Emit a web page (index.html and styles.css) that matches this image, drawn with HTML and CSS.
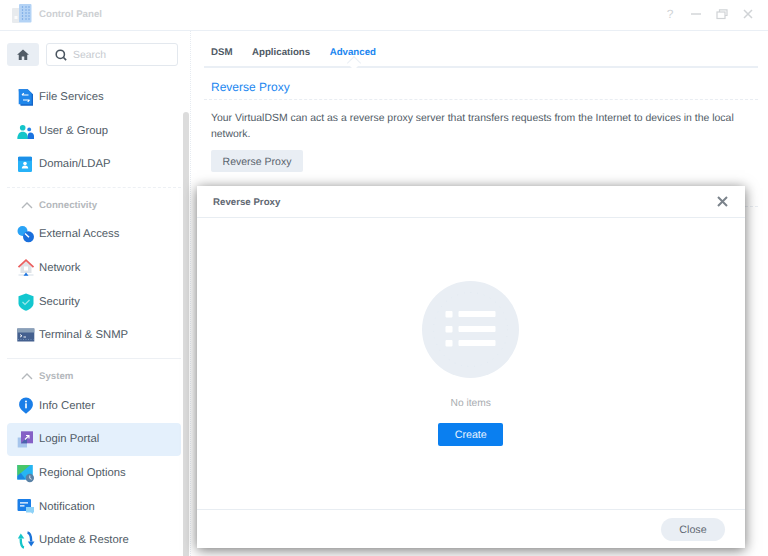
FILE: index.html
```html
<!DOCTYPE html>
<html lang="en">
<head>
<meta charset="utf-8">
<title>Control Panel</title>
<link rel="stylesheet" href="styles.css">
</head>
<body>
<div class="window">
  <header class="titlebar">
    <div class="title-left">
      <svg class="app-icon" width="20" height="20" viewBox="0 0 20 20">
        <rect x="0" y="4" width="8" height="15" rx="1" fill="#e8ebee"/>
        <rect x="2.500" y="12" width="3" height="3" fill="#fbfcfc"/>
        <rect x="7" y="0" width="12.500" height="18.500" rx="1" fill="#b4d3f5"/>
        <path d="M10.500 2v14M14 2v14M17 2v14" stroke="#86b2e8" stroke-width="1.200" stroke-dasharray="2 1"/>
      </svg>
      <span class="title-text">Control Panel</span>
    </div>
    <div class="title-actions">
      <span class="help">?</span>
      <svg width="12" height="12" viewBox="0 0 12 12"><path d="M1 6h10" stroke="#d0d3d6" stroke-width="1.400"/></svg>
      <svg width="12" height="12" viewBox="0 0 12 12" fill="none" stroke="#d0d3d6" stroke-width="1.200"><rect x="1" y="4" width="8" height="6.500"/><path d="M3.500 4V1.800h7.500v5.700H9"/></svg>
      <svg width="12" height="12" viewBox="0 0 12 12"><path d="M2 2l8 8M10 2l-8 8" stroke="#d0d3d6" stroke-width="1.500"/></svg>
    </div>
  </header>
  <div class="body">
    <aside class="sidebar">
      <div class="tools">
        <button class="home"><svg width="12" height="11" viewBox="0 0 14 13"><path d="M7 .5L0 6.800h2V13h3.500V9h3v4H12V6.800h2z" fill="#525c66"/></svg></button>
        <div class="search">
          <svg width="12" height="12" viewBox="0 0 14 14" fill="none" stroke="#4a5560" stroke-width="1.800"><circle cx="6.200" cy="6.200" r="4.800"/><path d="M9.800 9.800L13 13"/></svg>
          <span>Search</span>
        </div>
      </div>
      <nav class="nav">
        <div class="group">
          <a class="item"><svg class="ico" viewBox="0 0 18 18"><path d="M1.700 1.300h9l5.300 5v11.400H3.500z" fill="#1565c8"/><path d="M1.700 1.300h9l4 4v11H1.700z" fill="#1f86ea"/><path d="M5 7h6.500M5 7l1.800-1.800M12.500 12H6M12.500 12l-1.800 1.800" stroke="#fff" stroke-width="1.200" fill="none"/></svg><span>File Services</span></a>
          <a class="item"><svg class="ico" viewBox="0 0 18 18"><circle cx="5.700" cy="5.700" r="2.800" fill="#15c5c9"/><path d="M.3 17c0-4.800 2.200-7.300 5.400-7.300S11 12.200 11 17z" fill="#15c5c9"/><circle cx="12.200" cy="7.400" r="1.900" fill="#2483e8"/><path d="M10.700 17v-3c0-2 .8-3.600 2.800-3.600s3.500 1.600 3.500 3.600v3z" fill="#1a73e0"/></svg><span>User &amp; Group</span></a>
          <a class="item"><svg class="ico" viewBox="0 0 18 18"><rect x="1" y="1.700" width="14" height="15.300" rx="1.200" fill="#27b2f8"/><rect x="1" y="1.700" width="14" height="4" rx="1" fill="#1c8fe8"/><circle cx="8" cy="8.500" r="1.800" fill="#fff"/><path d="M4.800 13.500c0-2 1.300-3 3.200-3s3.200 1 3.200 3z" fill="#fff"/></svg><span>Domain/LDAP</span></a>
        </div>
        <div class="group">
          <div class="group-head"><svg width="12" height="7" viewBox="0 0 12 7" fill="none" stroke="#b4b8bc" stroke-width="1.400"><path d="M1 6l5-5 5 5"/></svg><span>Connectivity</span></div>
          <a class="item"><svg class="ico" viewBox="0 0 18 18"><path d="M4.500 1.500l8 8-3 3.500-8-7.500z" fill="#2aa3f6"/><circle cx="5.500" cy="6" r="5" fill="#2aa3f6"/><circle cx="11.500" cy="11.800" r="5.500" fill="#1a6fdc"/><path d="M8 8.500l4 3.800" stroke="#fff" stroke-width="1.400"/></svg><span>External Access</span></a>
          <a class="item"><svg class="ico" viewBox="0 0 18 18"><path d="M3.500 7.500L9 2.500l5.500 5v6.500h-11z" fill="#dfe3e7"/><path d="M1.500 8.200L9 1.200l7.500 7" stroke="#ea5f5f" stroke-width="1.800" fill="none"/><rect x="7" y="7.500" width="4" height="4" fill="#fff"/><path d="M1.500 16h15" stroke="#c8d4df" stroke-width=".8"/><path d="M9 13.500L6.500 16.800h5z" fill="#1a73e0"/></svg><span>Network</span></a>
          <a class="item"><svg class="ico" viewBox="0 0 18 18"><path d="M9 .500l7.500 2.700v7c0 3.500-3.500 6-7.500 7.500-4-1.500-7.500-4-7.500-7.500v-7z" fill="#13c7cf"/><path d="M5.500 9l2.500 2.500 4.500-4.500" stroke="#9ae8ea" stroke-width="1.200" fill="none"/></svg><span>Security</span></a>
          <a class="item"><svg class="ico" viewBox="0 0 18 18"><rect x=".3" y="2.500" width="17" height="13" fill="#44608f"/><rect x=".3" y="2.500" width="17" height="4" fill="#8aa0b8"/><path d="M3 8.500l2 1.300-2 1.300M6.500 11H9" stroke="#fff" stroke-width=".9" fill="none"/><path d="M1 13.500h15.500" stroke="#6f8fb8" stroke-width="1" stroke-dasharray="1 1.500"/></svg><span>Terminal &amp; SNMP</span></a>
        </div>
        <div class="group">
          <div class="group-head"><svg width="12" height="7" viewBox="0 0 12 7" fill="none" stroke="#b4b8bc" stroke-width="1.400"><path d="M1 6l5-5 5 5"/></svg><span>System</span></div>
          <a class="item"><svg class="ico" viewBox="0 0 18 18"><path d="M9 .500a6.900 6.900 0 0 1 6.900 6.900c0 4.300-3.900 6.500-6.900 9.300-3-2.800-6.900-5-6.900-9.300A6.900 6.900 0 0 1 9 .500z" fill="#1a7ee8"/><rect x="8.200" y="6.300" width="1.600" height="5" fill="#fff"/><circle cx="9" cy="4.400" r="1" fill="#fff"/></svg><span>Info Center</span></a>
          <a class="item active"><svg class="ico" viewBox="0 0 18 18"><rect x=".7" y="7.500" width="9.300" height="10" fill="#a6c5ec"/><rect x="4" y="1.300" width="12" height="12" fill="#8560c6"/><path d="M4 13.300l6-6v6z" fill="#4a64ad"/><path d="M8 9.500l4-4M9 5.500h3v3" stroke="#fff" stroke-width="1.100" fill="none"/></svg><span>Login Portal</span></a>
          <a class="item"><svg class="ico" viewBox="0 0 18 18"><rect x=".3" y="1" width="15.500" height="14.500" fill="#26b5f2"/><path d="M.3 1h13L.3 12z" fill="#48c66a"/><path d="M.3 12l3.500-3 5 6.500H.3z" fill="#1a86e0"/><circle cx="12.800" cy="14" r="4.200" fill="#5a82a6"/><path d="M12.800 11.500V14.300l1.800 1" stroke="#fff" stroke-width=".8" fill="none"/></svg><span>Regional Options</span></a>
          <a class="item"><svg class="ico" viewBox="0 0 18 18"><rect x=".5" y="1" width="13.500" height="12" rx="1" fill="#1a7ee8"/><path d="M3 4.800h8M3 7.800h4.500" stroke="#fff" stroke-width="1.200"/><path d="M9 9h8v5.500h-1v1.500l-2-1.500H9z" fill="#8ed2f7"/></svg><span>Notification</span></a>
          <a class="item"><svg class="ico" viewBox="0 0 18 18"><path d="M7 16.500C4.300 16 3.700 12 3.700 7.500" fill="none" stroke="#16c5ca" stroke-width="2.400"/><path d="M3.800 2.500L.8 7.500h6.500z" fill="#16c5ca"/><path d="M10.500 1.500c2.800.5 3.700 4.500 3.700 9" fill="none" stroke="#1a73d9" stroke-width="2.400"/><path d="M14.200 15.500l-3.300-5h6.600z" fill="#1a73d9"/></svg><span>Update &amp; Restore</span></a>
        </div>
      </nav>
      <div class="scrollbar"></div>
    </aside>
    <main class="main">
      <div class="tabs">
        <span class="tab">DSM</span>
        <span class="tab">Applications</span>
        <span class="tab current">Advanced</span>
      </div>
      <section class="section">
        <h2 class="section-title">Reverse Proxy</h2>
        <p class="section-text">Your VirtualDSM can act as a reverse proxy server that transfers requests from the Internet to devices in the local network.</p>
        <button class="btn-grey">Reverse Proxy</button>
        <div class="section-rule"></div>
      </section>
    </main>
  </div>
  <div class="dialog">
    <div class="dialog-head">
      <span class="dialog-title">Reverse Proxy</span>
      <svg width="11" height="11" viewBox="0 0 11 11"><path d="M1 1l9 9M10 1l-9 9" stroke="#7b838b" stroke-width="2"/></svg>
    </div>
    <div class="dialog-body">
      <svg class="empty-art" width="97" height="97" viewBox="0 0 97 97">
        <circle cx="48.500" cy="48.500" r="48.500" fill="#e9eef4"/>
        <circle cx="48.500" cy="48.500" r="37" fill="none" stroke="#dbe5ef" stroke-width=".7" stroke-dasharray=".7 6"/>
        <g fill="#fff">
          <rect x="23.500" y="30" width="7" height="6.500" rx="1"/><rect x="36.500" y="30" width="37" height="6" rx="1"/>
          <rect x="23.500" y="45" width="7" height="6.500" rx="1"/><rect x="36.500" y="45" width="37" height="6" rx="1"/>
          <rect x="23.500" y="59" width="7" height="6.500" rx="1"/><rect x="36.500" y="59" width="37" height="6" rx="1"/>
        </g>
      </svg>
      <p class="empty-text">No items</p>
      <button class="btn-blue">Create</button>
    </div>
    <div class="dialog-foot"><button class="btn-close">Close</button></div>
  </div>
</div>
</body>
</html>
```
FILE: styles.css
```css
* { box-sizing: border-box; }
html, body { margin: 0; padding: 0; height: 100%; overflow: hidden; }
body { font-family: "Liberation Sans", Arial, sans-serif; color: #4f5a65; background: #fff; text-rendering: geometricPrecision; }
button { text-rendering: geometricPrecision; }
.window { position: relative; width: 768px; height: 556px; overflow: hidden; background: #fff; }
.titlebar { height: 31px; display: flex; justify-content: space-between; align-items: center; padding: 0 14px 2px 12px; border-bottom: 1px solid #eaeff5; }
.title-left { display: flex; align-items: center; gap: 7px; }
.app-icon { display: block; }
.title-text { font-size: 9.700px; font-weight: 700; color: #cdd0d3; margin-top: 1px; }
.title-actions { display: flex; align-items: center; gap: 14px; }
.help { width: 12px; font-size: 12px; color: #d0d3d6; text-align: center; }
.body { display: flex; height: 525px; }
.sidebar { position: relative; width: 191px; flex: none; padding: 12px 0 0 7px; border-right: 1px dotted #e6ebf1; overflow: hidden; }
.tools { display: flex; gap: 7px; width: 171px; margin-bottom: 14px; }
.home { width: 32px; height: 23px; border: 0; padding: 0; background: #e9eef4; border-radius: 3px; display: flex; align-items: center; justify-content: center; }
.search { flex: 1; height: 23px; border: 1px solid #e3e8ee; border-radius: 3px; display: flex; align-items: center; gap: 6px; padding: 1px 0 0 8px; font-size: 10.400px; color: #c6cacf; }
.nav { width: 174px; }
.group { padding-bottom: 5.500px; }
.group + .group { border-top: 1px dashed #edf0f4; }
.group:last-child { border-top: 1px solid #edf0f4; }
.group-head { height: 30px; display: flex; align-items: center; gap: 6px; padding: 5px 0 0 14px; font-size: 9.700px; font-weight: 700; color: #b4b8bc; }
.group-head svg { display: block; }
.item { display: flex; align-items: center; height: 33.700px; padding-left: 10px; border-radius: 4px; font-size: 11.300px; color: #505b66; }
.item.active { background: #e4f0fc; }
.ico { width: 18px; height: 18px; flex: none; margin-right: 4px; overflow: visible; }
.scrollbar { position: absolute; left: 183px; top: 81px; bottom: 0; width: 6px; background: #dcdcdc; border-radius: 3px 3px 0 0; }
.main { flex: 1; padding: 0 10px 0 13px; min-width: 0; }
.tabs { display: flex; gap: 19.500px; height: 37px; align-items: center; padding: 7px 0 0 7px; border-bottom: 2px solid #eaeff5; font-size: 9.700px; font-weight: 700; color: #4f5a65; position: relative; }
.tab.current { color: #1a86f0; position: relative; }
.tab.current::after { content: ""; position: absolute; left: 50%; bottom: -10px; width: 9px; height: 9px; margin-left: -4px; background: #fff; border-left: 1px solid #eaeff5; border-top: 1px solid #eaeff5; transform: rotate(45deg); }
.section-title { margin: 0; padding: 11px 0 4px 7px; height: 32px; font-size: 12px; line-height: 17px; font-weight: 400; color: #1a86f0; border-bottom: 1px dashed #e9edf2; }
.section-text { margin: 10.500px 0 6.500px; padding-left: 7px; font-size: 10.450px; line-height: 16.500px; color: #505b66; }
.btn-grey { display: block; margin-left: 7px; width: 92px; height: 22px; border: 0; border-radius: 2px; background: #e9eef4; font: 10.500px "Liberation Sans", Arial, sans-serif; color: #5a646e; padding: 1px 0 0; }
.section-rule { margin-top: 34px; border-top: 1px dashed #e9edf2; }
.dialog { position: absolute; left: 197px; top: 186px; width: 548px; height: 362px; background: #fff; box-shadow: 0 2px 12px rgba(0,0,0,.55); display: flex; flex-direction: column; }
.dialog-head { height: 32px; flex: none; display: flex; align-items: center; justify-content: space-between; padding: 0 17px 0 16px; border-bottom: 1px solid #e8edf2; font-size: 9.700px; font-weight: 700; color: #5f6872; }
.dialog-title { margin-top: 1px; }
.dialog-body { flex: 1; display: flex; flex-direction: column; align-items: center; padding: 63px .5px 0 0; }
.empty-art { display: block; }
.empty-text { margin: 19px 0 0; font-size: 10.250px; line-height: 14px; color: #a9adb1; }
.btn-blue { margin-top: 12px; width: 65px; height: 23px; border: 0; border-radius: 2px; background: #0a7ff0; color: #e8f3ff; font: 10.700px "Liberation Sans", Arial, sans-serif; padding: 1px 0 0; }
.dialog-foot { height: 39px; flex: none; border-top: 1px solid #e8edf2; display: flex; align-items: center; justify-content: flex-end; padding: 0 20px 0 0; }
.btn-close { width: 64px; height: 23px; border: 0; border-radius: 12px; background: #e9eef4; color: #5f6872; font: 10.700px "Liberation Sans", Arial, sans-serif; padding: 1px 0 0; }
```
